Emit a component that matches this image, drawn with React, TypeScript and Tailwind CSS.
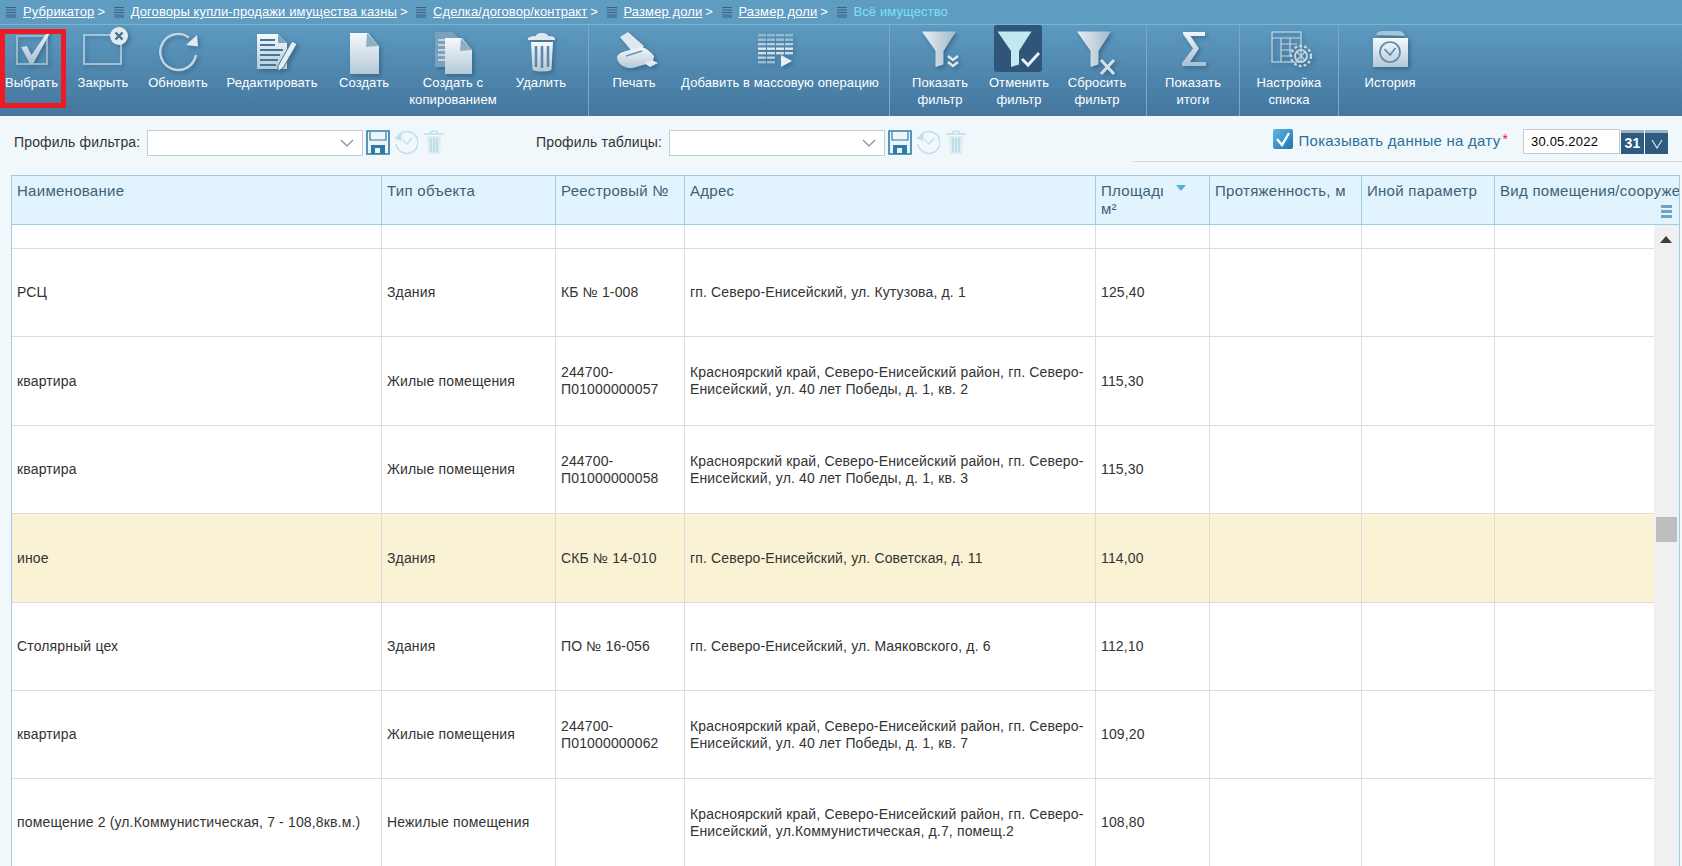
import React from "react";

const shadow = "overflow-visible drop-shadow-[2px_2px_2px_rgba(10,40,70,0.35)]";

const Glyph = ({ children, plain }: { children: React.ReactNode; plain?: boolean }) => (
  <svg width="60" height="48" viewBox="0 0 60 48" className={plain ? "overflow-visible" : shadow}>
    {children}
  </svg>
);

const Funnel = ({ dx = 0, fill = "url(#funnel)" }: { dx?: number; fill?: string }) => (
  <path transform={`translate(${dx} 0)`} d="M12 6.5H46L33.5 26V39.5L25.5 42V26Z" fill={fill} />
);

const Gradients = () => (
  <svg className="absolute h-0 w-0">
    <defs>
      <linearGradient id="sheet" x1="0" y1="0" x2="0" y2="1">
        <stop offset="0" stopColor="#f5f9fc" />
        <stop offset="1" stopColor="#b4c9d8" />
      </linearGradient>
      <linearGradient id="funnel" x1="0" y1="0" x2="1" y2="0">
        <stop offset="0" stopColor="#e8eff4" />
        <stop offset="1" stopColor="#a2bacb" />
      </linearGradient>
      <linearGradient id="tick" x1="0" y1="0" x2="0" y2="1">
        <stop offset="0" stopColor="#f0f5f8" />
        <stop offset="1" stopColor="#a8c0d1" />
      </linearGradient>
    </defs>
  </svg>
);

const massRows = [
  { y: 9, o: 0.45, n: 4 },
  { y: 13.5, o: 0.55, n: 4 },
  { y: 18, o: 0.7, n: 4 },
  { y: 22.5, o: 1, n: 4 },
  { y: 27, o: 0.9, n: 4 },
  { y: 31.5, o: 0.75, n: 2 },
  { y: 36, o: 0.55, n: 2 },
];

const icons: Record<string, React.ReactNode> = {
  select: (
    <Glyph>
      <rect x="15" y="11" width="30" height="28" fill="none" stroke="#9dbcd0" strokeWidth="1.8" />
      <path d="M19 22L25 21L29.5 30L46 6H49L31 39H28Z" fill="url(#tick)" />
    </Glyph>
  ),
  close: (
    <Glyph>
      <rect x="11" y="10" width="37" height="29" fill="none" stroke="#bcd0de" strokeWidth="1.6" />
      <circle cx="46" cy="11" r="9" fill="#e2eaf0" />
      <path d="M42.5 7.5L49.5 14.5M49.5 7.5L42.5 14.5" stroke="#44708f" strokeWidth="2.4" />
    </Glyph>
  ),
  refresh: (
    <Glyph>
      <path d="M41 12.5A18 18 0 1 0 48 30" fill="none" stroke="#c4d5e1" strokeWidth="2.4" />
      <path d="M49 10L50 21.5L38 20Z" fill="#e3ebf1" />
    </Glyph>
  ),
  edit: (
    <Glyph>
      <path d="M15 9H36L45 18V44H15Z" fill="url(#sheet)" />
      <path d="M36 9V18H45Z" fill="#7fa4be" />
      <path
        d="M18 15H33M18 20H33M18 25H41M18 30H38M18 35H36M18 40H34"
        stroke="#46779a"
        strokeWidth="2"
      />
      <path d="M36 41L50 16L55 19L41 43L36 46Z" fill="#e7eef3" stroke="#46779a" strokeWidth="1" />
    </Glyph>
  ),
  create: (
    <Glyph>
      <path d="M16 8H34L45 21V49H16Z" fill="url(#sheet)" />
      <path d="M33 8L45 21L32 22Z" fill="#8eafc6" />
    </Glyph>
  ),
  copy: (
    <Glyph>
      <path d="M12 7H30L36 13V42H12Z" fill="#7ba1bd" />
      <path d="M15 15H22M15 20H22M15 25H22M15 30H22M15 35H22" stroke="#c3d6e3" strokeWidth="2" />
      <path d="M22 13H39L49 25V49H22Z" fill="url(#sheet)" />
      <path d="M38 13L49 25L37 26Z" fill="#8eafc6" />
    </Glyph>
  ),
  trash: (
    <Glyph>
      <path d="M17 13C20 11 24 11 25 11C25 7 37 7 37 11C39 11 42 11 44 13V15H17Z" fill="#dfe8ee" />
      <path d="M20 17H42L40.5 45C36 47 26 47 21.5 45Z" fill="url(#sheet)" />
      <path d="M25 21V42M31 21V43M37 21V42" stroke="#5c89a8" strokeWidth="2.6" />
    </Glyph>
  ),
  print: (
    <Glyph>
      <path d="M16 12L24 7L40 21L30 29Z" fill="#dfe8ee" />
      <path
        d="M13 33C13 29 18 27 22 26L38 22C42 23 47 27 50 31C50 34 49 37 46 38L29 43C22 44 14 40 13 33Z"
        fill="url(#sheet)"
      />
      <path d="M22 31L38 26" stroke="#6f97b4" strokeWidth="1.6" />
      <path d="M40 38L48 35L54 38L46 42Z" fill="#e3ebf1" />
    </Glyph>
  ),
  mass: (
    <Glyph>
      <g fill="#e0eaf1">
        {massRows.map((r) =>
          [8, 17, 26, 35].slice(0, r.n).map((x) => (
            <rect key={`${r.y}-${x}`} x={x} y={r.y} width="8" height="2.4" opacity={r.o} />
          ))
        )}
      </g>
      <path d="M31 30L42 36L31 42Z" fill="#e8eff4" />
    </Glyph>
  ),
  filterShow: (
    <Glyph>
      <Funnel />
      <path d="M38 31L43 35L48 31M38 37L43 41L48 37" fill="none" stroke="#dfe8ee" strokeWidth="2.4" />
    </Glyph>
  ),
  filterOff: (
    <Glyph plain>
      <rect x="5" y="0" width="48" height="47" rx="3" fill="#2f5679" />
      <Funnel dx={-3.5} fill="#c3e8f1" />
      <path d="M33 34L39 40L50 28" fill="none" stroke="#e6f1f6" strokeWidth="3" />
    </Glyph>
  ),
  filterReset: (
    <Glyph>
      <Funnel dx={-2} />
      <path d="M34 35L47 49M47 35L34 49" stroke="#d5e1ea" strokeWidth="3" />
    </Glyph>
  ),
  sigma: (
    <Glyph>
      <path d="M20 7H42V11H27.5L36 23.5L27 37H43V41H19V38L30 23.5L20 9Z" fill="url(#tick)" />
    </Glyph>
  ),
  settings: (
    <Glyph>
      <g fill="none" stroke="#c5d5e1" strokeWidth="1.2">
        <rect x="13" y="7" width="29" height="30" />
        <path d="M13 13H42M22 13V37M22 19H38M22 25H34M22 31H31M31 13V31" />
        <circle cx="42" cy="31" r="6" strokeWidth="2" />
        <circle cx="42" cy="31" r="10" strokeWidth="2.4" strokeDasharray="3 2" />
        <path d="M38 27L46 35M46 27L38 35" strokeWidth="1.4" />
      </g>
    </Glyph>
  ),
  history: (
    <Glyph>
      <path d="M16 10C17 7 20 6 24 6H38C42 6 44 8 45 11Z" fill="#a9c4d6" />
      <path d="M13 13H48V42H13Z" fill="url(#sheet)" />
      <circle cx="30" cy="27" r="10" fill="none" stroke="#5c87a6" strokeWidth="1.6" />
      <path d="M24.5 24L30 30L35.5 23" fill="none" stroke="#5c87a6" strokeWidth="1.6" />
    </Glyph>
  ),
};

const ToolButton = ({ icon, lines, className }: { icon: string; lines: string[]; className: string }) => (
  <div className={`flex flex-col items-center ${className}`}>
    <div className="h-[49px]">{icons[icon]}</div>
    <div className="whitespace-nowrap text-center text-[13px] leading-[17px] tracking-[0.1px] text-white">
      {lines.map((l) => (
        <div key={l}>{l}</div>
      ))}
    </div>
  </div>
);

const Crumb = ({ text, current, last }: { text: string; current?: boolean; last?: boolean }) => (
  <>
    <svg width="10" height="12" viewBox="0 0 10 12" className="mr-[7px] shrink-0">
      <path d="M0 1.5H10M0 4H10M0 6.5H10M0 9H10M0 11H10" stroke="#2f4f68" strokeWidth="1.2" opacity=".75" />
    </svg>
    <span className={current ? "text-[#7de3f2]" : "text-white underline"}>{text}</span>
    {!last && <span className="mr-[8.5px] ml-[3px] text-white">&gt;</span>}
  </>
);

const Combo = () => (
  <div className="flex h-[26px] w-[216px] items-center justify-end border border-[#c4ccd2] bg-white pr-[8px]">
    <svg width="14" height="8" viewBox="0 0 14 8">
      <path d="M1 1L7 7L13 1" fill="none" stroke="#8b97a0" strokeWidth="1.4" />
    </svg>
  </div>
);

const ProfileIcons = () => (
  <div className="ml-[3px] flex items-start">
    <svg width="24" height="25" viewBox="0 0 24 25">
      <path d="M1 1H23V24H1Z" fill="#eaf4f9" stroke="#2f7ba8" strokeWidth="1.6" />
      <path d="M4 2V10H20V2" fill="none" stroke="#2f7ba8" strokeWidth="1.2" />
      <path d="M5 15H19V24H5Z" fill="#2f7ba8" />
      <rect x="9" y="18" width="5" height="5" fill="#eaf4f9" />
    </svg>
    <svg width="24" height="25" viewBox="0 0 24 25" className="ml-[4px]">
      <path d="M4 6A11 11 0 1 1 2 14" fill="none" stroke="#c3dfe9" strokeWidth="1.6" />
      <path d="M0 8L8 3L7 11Z" fill="#c3dfe9" />
      <path d="M8 9L13 14L18 8" fill="none" stroke="#c3dfe9" strokeWidth="1.4" />
    </svg>
    <svg width="20" height="25" viewBox="0 0 20 25" className="ml-[6px]">
      <path d="M0 4H20M6 4C6 0 14 0 14 4" fill="none" stroke="#c3dfe9" strokeWidth="1.6" />
      <path d="M3 6H17L16 24H4Z" fill="#dcedf4" />
      <path d="M7 8V22M10 8V22M13 8V22" stroke="#b4d6e3" strokeWidth="1.4" />
    </svg>
  </div>
);

const headCell = "border-r border-b border-[#a4cbe2] px-[5px] pt-[6px] text-left align-top font-normal";
const bodyCell = "border-r border-b border-[#dcdcdc] px-[5px] align-middle";

const addr1 = "Красноярский край, Северо-Енисейский район, гп. Северо-Енисейский, ул. 40 лет Победы, д. 1, кв.";

const rows = [
  { h: "h-[24px]", c: ["", "", "", "", ""] },
  { h: "h-[88px]", c: ["РСЦ", "Здания", "КБ № 1-008", "гп. Северо-Енисейский, ул. Кутузова, д. 1", "125,40"] },
  { h: "h-[89px]", c: ["квартира", "Жилые помещения", "244700-П01000000057", `${addr1} 2`, "115,30"] },
  { h: "h-[88px]", c: ["квартира", "Жилые помещения", "244700-П01000000058", `${addr1} 3`, "115,30"] },
  { h: "h-[89px]", c: ["иное", "Здания", "СКБ № 14-010", "гп. Северо-Енисейский, ул. Советская, д. 11", "114,00"], active: true },
  { h: "h-[88px]", c: ["Столярный цех", "Здания", "ПО № 16-056", "гп. Северо-Енисейский, ул. Маяковского, д. 6", "112,10"] },
  { h: "h-[88px]", c: ["квартира", "Жилые помещения", "244700-П01000000062", `${addr1} 7`, "109,20"] },
  {
    h: "h-[88px]",
    c: [
      "помещение 2 (ул.Коммунистическая, 7 - 108,8кв.м.)",
      "Нежилые помещения",
      "",
      "Красноярский край, Северо-Енисейский район, гп. Северо-Енисейский, ул.Коммунистическая, д.7, помещ.2",
      "108,80",
    ],
  },
];

export default function App() {
  return (
    <div className="relative h-[866px] overflow-hidden bg-[#f1f8fc] font-['Liberation_Sans',Arial,sans-serif]">
      <Gradients />
      <div className="flex h-[24px] items-center bg-[#5f9cc2] pl-[6px] text-[13px] leading-[16px] tracking-[0.1px]">
        <Crumb text="Рубрикатор" />
        <Crumb text="Договоры купли-продажи имущества казны" />
        <Crumb text="Сделка/договор/контракт" />
        <Crumb text="Размер доли" />
        <Crumb text="Размер доли" />
        <Crumb text="Всё имущество" current last />
      </div>

      <div className="relative flex h-[92px] border-t border-[#7fb3d1] bg-gradient-to-b from-[#5d9ac0] to-[#44769e]">
        <div className="flex w-[589px] border-r border-[#7aaac9]">
          <ToolButton icon="select" lines={["Выбрать"]} className="w-[63px]" />
          <ToolButton icon="close" lines={["Закрыть"]} className="w-[80px]" />
          <ToolButton icon="refresh" lines={["Обновить"]} className="w-[70px]" />
          <ToolButton icon="edit" lines={["Редактировать"]} className="w-[118px]" />
          <ToolButton icon="create" lines={["Создать"]} className="ml-[8px] w-[50px]" />
          <ToolButton icon="copy" lines={["Создать с", "копированием"]} className="ml-[6px] w-[116px]" />
          <ToolButton icon="trash" lines={["Удалить"]} className="w-[60px]" />
        </div>
        <div className="flex w-[301px] border-r border-[#7aaac9] pl-[4px]">
          <ToolButton icon="print" lines={["Печать"]} className="w-[82px]" />
          <ToolButton icon="mass" lines={["Добавить в массовую операцию"]} className="w-[210px]" />
        </div>
        <div className="flex w-[257px] border-r border-[#7aaac9] pl-[10px]">
          <ToolButton icon="filterShow" lines={["Показать", "фильтр"]} className="w-[80px]" />
          <ToolButton icon="filterOff" lines={["Отменить", "фильтр"]} className="w-[78px]" />
          <ToolButton icon="filterReset" lines={["Сбросить", "фильтр"]} className="w-[78px]" />
        </div>
        <div className="flex w-[93px] border-r border-[#7aaac9]">
          <ToolButton icon="sigma" lines={["Показать", "итоги"]} className="w-[92px]" />
        </div>
        <div className="flex w-[99px] border-r border-[#7aaac9]">
          <ToolButton icon="settings" lines={["Настройка", "списка"]} className="w-[98px]" />
        </div>
        <ToolButton icon="history" lines={["История"]} className="w-[102px]" />
        <div className="absolute top-[4px] left-0 h-[79px] w-[66px] border-[5px] border-[#ed1c24]" />
      </div>

      <div className="flex h-[59px] text-[14px] tracking-[0.15px] text-[#333]">
        <div className="flex items-start pt-[14px] pl-[14px]">
          <span className="w-[133px] whitespace-nowrap leading-[24px]">Профиль фильтра:</span>
          <Combo />
          <ProfileIcons />
        </div>
        <div className="ml-[92px] flex items-start pt-[14px]">
          <span className="w-[133px] whitespace-nowrap leading-[24px]">Профиль таблицы:</span>
          <Combo />
          <ProfileIcons />
        </div>
        <div className="ml-auto flex h-[46px] w-[549px] items-start justify-end border-b border-[#d3d9dd] pt-[13px] pr-[14px]">
          <div className="flex h-[20px] w-[20px] items-center justify-center rounded-[2px] bg-gradient-to-br from-[#5fb6e4] to-[#1c75ac]">
            <svg width="16" height="16" viewBox="0 0 16 16">
              <path d="M2 8L7 14L14 2" fill="none" stroke="#fff" strokeWidth="2.4" />
            </svg>
          </div>
          <span className="ml-[6px] text-[15px] leading-[24px] tracking-[0.25px] text-[#2a6f9d]">
            Показывать данные на дату
          </span>
          <span className="mr-[15px] ml-[2px] text-[14px] leading-[20px] text-[#ee1c25]">*</span>
          <div className="h-[25px] w-[97px] border border-[#c4ccd2] bg-white pl-[7px] text-[13px] leading-[23px] tracking-[0.2px] text-black">
            30.05.2022
          </div>
          <div className="mt-[1px] ml-[1px] flex h-[24px] w-[23px] items-center justify-center border-t-[3px] border-[#9db2c1] bg-[#2f5a80] text-[14px] font-bold text-white">
            31
          </div>
          <div className="mt-[1px] ml-[1px] flex h-[24px] w-[23px] items-center justify-center border-t-[3px] border-[#9db2c1] bg-[#2f5a80]">
            <svg width="12" height="10" viewBox="0 0 12 10">
              <path d="M1 1L6 9L11 1" fill="none" stroke="#d8e4ec" strokeWidth="1.2" />
            </svg>
          </div>
        </div>
      </div>

      <div className="relative ml-[11px] w-[1669px] overflow-hidden border-x border-t border-[#a4cbe2] bg-white">
        <table className="w-[1683px] table-fixed border-separate border-spacing-0 text-[14px] leading-[17px] tracking-[0.15px] text-[#333]">
          <colgroup>
            <col className="w-[370px]" />
            <col className="w-[174px]" />
            <col className="w-[129px]" />
            <col className="w-[411px]" />
            <col className="w-[114px]" />
            <col className="w-[152px]" />
            <col className="w-[133px]" />
            <col className="w-[200px]" />
          </colgroup>
          <thead className="bg-[#e1f3fc] text-[15px] leading-[18px] tracking-[0.28px] text-[#3f5f76]">
            <tr className="h-[49px]">
              <th className={headCell}>Наименование</th>
              <th className={headCell}>Тип объекта</th>
              <th className={headCell}>Реестровый №</th>
              <th className={headCell}>Адрес</th>
              <th className={headCell}>
                <div className="w-[62px] overflow-hidden whitespace-nowrap">Площадь,</div>
                <div>м²</div>
              </th>
              <th className={`${headCell} whitespace-nowrap`}>Протяженность, м</th>
              <th className={headCell}>Иной параметр</th>
              <th className={`${headCell} whitespace-nowrap`}>Вид помещения/сооружения</th>
            </tr>
          </thead>
          <tbody>
            {rows.map((row, i) => (
              <tr key={i} className={`${row.h} ${row.active ? "bg-[#f9f2d5]" : "bg-white"}`}>
                {row.c.map((cell, j) => (
                  <td key={j} className={bodyCell}>
                    {cell}
                  </td>
                ))}
                <td className={bodyCell} />
                <td className={bodyCell} />
                <td className={bodyCell} />
              </tr>
            ))}
          </tbody>
        </table>

        <svg width="10" height="6" viewBox="0 0 10 6" className="absolute top-[9px] left-[1164px]">
          <path d="M0 0H10L5 6Z" fill="#4fb0e0" />
        </svg>
        <div className="absolute top-[29px] left-[1649px] flex w-[11px] flex-col gap-[2.5px]">
          <div className="h-[2.5px] bg-[#6fa3c3]" />
          <div className="h-[2.5px] bg-[#6fa3c3]" />
          <div className="h-[2.5px] bg-[#6fa3c3]" />
        </div>
        <div className="absolute top-[49px] bottom-0 left-[1642px] w-[25px] bg-[#f0f0f0]">
          <svg width="12" height="7" viewBox="0 0 12 7" className="absolute top-[11px] left-[6px]">
            <path d="M0 7L6 0L12 7Z" fill="#3c3c3c" />
          </svg>
          <div className="absolute top-[292px] left-[2px] h-[25px] w-[21px] bg-[#bebebe]" />
        </div>
      </div>
    </div>
  );
}
